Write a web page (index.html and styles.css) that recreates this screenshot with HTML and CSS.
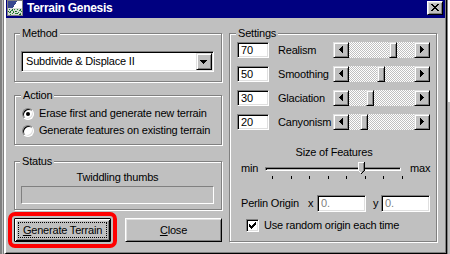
FILE: index.html
```html
<!DOCTYPE html>
<html>
<head>
<meta charset="utf-8">
<link rel="stylesheet" href="styles.css">
</head>
<body>
<div class="screen">
  <div class="desk-left"></div>
  <div class="window">
    <div class="titlebar">
      <svg class="app-icon" width="16" height="16" viewBox="0 0 16 16" shape-rendering="crispEdges">
        <rect x="0" y="0" width="16" height="16" fill="#808080"/>
        <rect x="1" y="1" width="14" height="14" fill="#c8d0d8"/>
        <rect x="1" y="1" width="9" height="7" fill="#384890"/>
        <polygon points="10,1 15,1 15,8 6,8" fill="#ffffff"/>
        <rect x="1" y="8" width="14" height="7" fill="#d8dcd8"/>
        <path d="M2 9h1v1H2zM4 10h2v1H4zM7 9h1v1H7zM9 11h1v1H9zM12 10h2v1h-2zM2 12h2v1H2zM5 13h1v1H5zM8 13h2v1H8zM11 12h1v1h-1zM13 13h1v1h-1zM3 14h1v1H3zM6 11h1v1H6zM10 9h1v1h-1zM14 11h1v1h-1z" fill="#2a8a3a"/>
        <path d="M1 11h1v1H1zM3 11h1v1H3zM6 12h1v1H6zM10 13h1v1h-1zM12 14h2v1h-2zM5 9h1v1H5zM8 11h1v1H8zM13 9h1v1h-1z" fill="#106020"/>
      </svg>
      <span class="title">Terrain Genesis</span>
      <span class="title-close">
        <svg width="14" height="12" viewBox="0 0 14 12" shape-rendering="crispEdges">
          <path d="M3 2h2v1H3zM9 2h2v1H9zM4 3h2v1H4zM8 3h2v1H8zM5 4h4v1H5zM6 5h2v1H6zM5 6h4v1H5zM4 7h2v1H4zM8 7h2v1H8zM3 8h2v1H3zM9 8h2v1H9z" fill="#000"/>
        </svg>
      </span>
    </div>
    <div class="client">
      <div class="col-left">
        <fieldset class="group method">
          <legend>Method</legend>
          <div class="combo">
            <span class="combo-text">Subdivide &amp; Displace II</span>
            <span class="combo-btn">
              <svg width="14" height="15" viewBox="0 0 14 15" shape-rendering="crispEdges"><path d="M3 6h7v1H3zM4 7h5v1H4zM5 8h3v1H5zM6 9h1v1H6z" fill="#000"/></svg>
            </span>
          </div>
        </fieldset>
        <fieldset class="group action">
          <legend>Action</legend>
          <div class="radio-row"><span class="radio checked"><span class="dot"></span></span><span>Erase first and generate new terrain</span></div>
          <div class="radio-row"><span class="radio"></span><span>Generate features on existing terrain</span></div>
        </fieldset>
        <fieldset class="group status">
          <legend>Status</legend>
          <div class="status-text">Twiddling thumbs</div>
          <div class="progress"></div>
        </fieldset>
        <div class="buttons">
          <div class="btn default highlighted"><span class="focus"><u>G</u>enerate Terrain</span></div>
          <div class="btn"><span class="plain"><u>C</u>lose</span></div>
        </div>
      </div>
      <fieldset class="group settings">
        <legend>Settings</legend>
        <div class="set-row">
          <div class="edit">70</div>
          <span class="set-label">Realism</span>
          <div class="hscroll">
            <span class="arrow"><svg width="14" height="14" viewBox="0 0 14 14" shape-rendering="crispEdges"><path d="M5 6h1v1H5zM6 5h1v3H6zM7 4h1v5H7zM8 3h1v7H8z" fill="#000"/></svg></span>
            <div class="track"><span class="thumb" style="margin-left:40px"></span></div>
            <span class="arrow"><svg width="14" height="14" viewBox="0 0 14 14" shape-rendering="crispEdges"><path d="M5 3h1v7H5zM6 4h1v5H6zM7 5h1v3H7zM8 6h1v1H8z" fill="#000"/></svg></span>
          </div>
        </div>
        <div class="set-row">
          <div class="edit">50</div>
          <span class="set-label">Smoothing</span>
          <div class="hscroll">
            <span class="arrow"><svg width="14" height="14" viewBox="0 0 14 14" shape-rendering="crispEdges"><path d="M5 6h1v1H5zM6 5h1v3H6zM7 4h1v5H7zM8 3h1v7H8z" fill="#000"/></svg></span>
            <div class="track"><span class="thumb" style="margin-left:28px"></span></div>
            <span class="arrow"><svg width="14" height="14" viewBox="0 0 14 14" shape-rendering="crispEdges"><path d="M5 3h1v7H5zM6 4h1v5H6zM7 5h1v3H7zM8 6h1v1H8z" fill="#000"/></svg></span>
          </div>
        </div>
        <div class="set-row">
          <div class="edit">30</div>
          <span class="set-label">Glaciation</span>
          <div class="hscroll">
            <span class="arrow"><svg width="14" height="14" viewBox="0 0 14 14" shape-rendering="crispEdges"><path d="M5 6h1v1H5zM6 5h1v3H6zM7 4h1v5H7zM8 3h1v7H8z" fill="#000"/></svg></span>
            <div class="track"><span class="thumb" style="margin-left:17px"></span></div>
            <span class="arrow"><svg width="14" height="14" viewBox="0 0 14 14" shape-rendering="crispEdges"><path d="M5 3h1v7H5zM6 4h1v5H6zM7 5h1v3H7zM8 6h1v1H8z" fill="#000"/></svg></span>
          </div>
        </div>
        <div class="set-row">
          <div class="edit">20</div>
          <span class="set-label">Canyonism</span>
          <div class="hscroll">
            <span class="arrow"><svg width="14" height="14" viewBox="0 0 14 14" shape-rendering="crispEdges"><path d="M5 6h1v1H5zM6 5h1v3H6zM7 4h1v5H7zM8 3h1v7H8z" fill="#000"/></svg></span>
            <div class="track"><span class="thumb" style="margin-left:11px"></span></div>
            <span class="arrow"><svg width="14" height="14" viewBox="0 0 14 14" shape-rendering="crispEdges"><path d="M5 3h1v7H5zM6 4h1v5H6zM7 5h1v3H7zM8 6h1v1H8z" fill="#000"/></svg></span>
          </div>
        </div>

        <div class="size-label">Size of Features</div>
        <div class="slider-row">
          <span class="min">min</span>
          <div class="channel-wrap">
            <div class="channel"></div>
            <svg class="slider-thumb" style="left:93px" width="7" height="12" viewBox="0 0 7 12" shape-rendering="crispEdges">
              <path d="M0 0h7v9l-3 3l-3 -3z" fill="#c0c0c0"/>
              <path d="M0 0h6v1H1v8H0z" fill="#ffffff"/>
              <path d="M6 0h1v9H6zM5 9h1v1H5zM4 10h1v1H4zM3 11h1v1H3z" fill="#000"/>
              <path d="M5 1h1v8H5zM4 9h1v1H4z" fill="#808080"/>
              <path d="M1 9h1v1H1zM2 10h1v1H2z" fill="#ffffff"/>
            </svg>
          </div>
          <span class="max">max</span>
        </div>
        <div class="ticks">
          <span></span><span></span><span></span><span></span><span></span><span></span><span></span><span></span>
        </div>

        <div class="perlin-row">
          <span class="perlin-label">Perlin Origin</span>
          <span class="axis">x</span>
          <div class="edit wide disabled">0.</div>
          <span class="axis y">y</span>
          <div class="edit wide disabled">0.</div>
        </div>
        <div class="check-row">
          <span class="checkbox">
            <svg width="9" height="9" viewBox="0 0 9 9" shape-rendering="crispEdges">
              <path d="M7 1h1v1H7zM6 2h2v1H6zM1 3h1v1H1zM5 3h3v1H5zM1 4h2v1H1zM4 4h3v1H4zM1 5h5v1H1zM2 6h3v1H2zM3 7h1v1H3z" fill="#000"/>
            </svg>
          </span>
          <span>Use random origin each time</span>
        </div>
      </fieldset>
    </div>
  </div>
  <div class="desk-right"></div>
</div>
</body>
</html>
```
FILE: styles.css
```css
html, body {
  margin: 0;
  padding: 0;
}
body {
  width: 450px;
  height: 254px;
  overflow: hidden;
  background: #c0c0c0;
  font-family: "Liberation Sans", Arial, sans-serif;
  font-size: 11px;
  line-height: 13px;
  letter-spacing: -0.2px;
  color: #000;
}
.screen {
  display: flex;
  width: 450px;
  height: 254px;
}
.desk-left {
  width: 4px;
  flex: none;
  background: linear-gradient(to right, #808080 0 2px, #c0c0c0 2px 3px, #808080 3px 4px);
}
.window {
  width: 443px;
  height: 254px;
  flex: none;
  box-sizing: border-box;
  background: #c0c0c0;
  border-left: 2px solid #fff;
  border-right: 1px solid #000;
  border-bottom: 1px solid #000;
  box-shadow: inset -1px -1px 0 #808080;
  display: flex;
  flex-direction: column;
}
.desk-right {
  flex: 1;
  background: linear-gradient(#ffffff 0 40%, #c0c0c0 40% 100%);
  border-left: 1px solid #808080;
}

/* title bar */
.titlebar {
  height: 18px;
  flex: none;
  margin-right: 1px;
  background: #000080;
  display: flex;
  align-items: center;
  color: #fff;
}
.app-icon {
  margin-left: 1px;
  margin-top: -2px;
  flex: none;
}
.title {
  margin-left: 4px;
  font-weight: bold;
  font-size: 12px;
  letter-spacing: -0.3px;
  margin-top: -1px;
}
.title-close {
  margin-left: auto;
  margin-right: 2px;
  margin-top: -3px;
  width: 16px;
  height: 14px;
  box-sizing: border-box;
  background: #c0c0c0;
  border: 1px solid;
  border-color: #fff #000 #000 #fff;
  box-shadow: inset 1px 1px 0 #dfdfdf, inset -1px -1px 0 #808080;
  display: flex;
}

/* client */
.client {
  flex: 1;
  padding: 9px 0 0 8px;
  display: grid;
  grid-template-columns: 208px 208px;
  column-gap: 7px;
  align-items: stretch;
  align-content: start;
}
.col-left {
  display: flex;
  flex-direction: column;
}

.group {
  margin: 0;
  min-inline-size: 0;
  border: 1px solid #808080;
  box-shadow: 1px 1px 0 #fff, inset 1px 1px 0 #fff;
}
.group legend {
  padding: 0 2px;
  margin-left: -1px;
  line-height: 13px;
  background: #c0c0c0;
}

/* method */
.method {
  padding: 11px 7px 9px 6px;
}
.combo {
  width: 193px;
  height: 21px;
  box-sizing: border-box;
  background: #fff;
  border: 1px solid;
  border-color: #808080 #fff #fff #808080;
  box-shadow: inset 1px 1px 0 #000, inset -1px -1px 0 #dfdfdf;
  display: flex;
  align-items: center;
  padding: 1px;
}
.combo-text {
  flex: 1;
  padding-left: 3px;
}
.combo-btn {
  width: 16px;
  height: 17px;
  box-sizing: border-box;
  background: #c0c0c0;
  border: 1px solid;
  border-color: #dfdfdf #000 #000 #dfdfdf;
  box-shadow: inset 1px 1px 0 #fff, inset -1px -1px 0 #808080;
  display: flex;
}

/* action */
.action {
  margin-top: 7px;
  padding: 3px 6px 5px 7px;
}
.radio-row {
  height: 17px;
  display: flex;
  align-items: center;
}
.radio {
  width: 12px;
  height: 12px;
  box-sizing: border-box;
  border-radius: 50%;
  background: #fff;
  border: 1px solid;
  border-color: #808080 #fff #fff #808080;
  box-shadow: inset 1px 1px 0 #000, inset -1px -1px 0 #dfdfdf;
  margin-right: 5px;
  display: flex;
  align-items: center;
  justify-content: center;
  flex: none;
}
.radio .dot {
  width: 4px;
  height: 4px;
  border-radius: 50%;
  background: #000;
}

/* status */
.status {
  margin-top: 10px;
  padding: 3px 7px 5px 6px;
}
.status-text {
  text-align: center;
}
.progress {
  margin-top: 2px;
  height: 18px;
  box-sizing: border-box;
  border: 1px solid;
  border-color: #808080 #fff #fff #808080;
}

/* buttons */
.buttons {
  margin-top: 8px;
  display: flex;
  gap: 14px;
}
.btn {
  width: 97px;
  height: 24px;
  box-sizing: border-box;
  border: 1px solid;
  border-color: #fff #000 #000 #fff;
  box-shadow: inset 1px 1px 0 #dfdfdf, inset -1px -1px 0 #808080;
  display: flex;
  padding: 3px;
}
.btn.default {
  border: 1px solid #000;
  box-shadow: inset 1px 1px 0 #fff, inset -1px -1px 0 #000, inset 2px 2px 0 #dfdfdf, inset -2px -2px 0 #808080;
}
.btn.highlighted {
  outline: 4px solid #ff0000;
  outline-offset: 2px;
  border-radius: 1px;
}
.focus, .plain {
  flex: 1;
  display: flex;
  align-items: center;
  justify-content: center;
}
.focus {
  border: 1px dotted #000;
}

/* settings */
.settings {
  padding: 2px 7px 1px 7px;
}
.set-row {
  display: flex;
  align-items: center;
  height: 16px;
  margin-bottom: 8px;
}
.edit {
  width: 32px;
  height: 16px;
  box-sizing: border-box;
  background: #fff;
  border: 1px solid;
  border-color: #808080 #fff #fff #808080;
  box-shadow: inset 1px 1px 0 #000, inset -1px -1px 0 #dfdfdf;
  padding-left: 3px;
  display: flex;
  align-items: center;
  flex: none;
}
.set-label {
  width: 55px;
  margin-left: 9px;
  flex: none;
  white-space: nowrap;
}
.hscroll {
  width: 97px;
  height: 16px;
  display: flex;
  flex: none;
}
.arrow {
  width: 16px;
  height: 16px;
  box-sizing: border-box;
  background: #c0c0c0;
  border: 1px solid;
  border-color: #dfdfdf #000 #000 #dfdfdf;
  box-shadow: inset 1px 1px 0 #fff, inset -1px -1px 0 #808080;
  display: flex;
  flex: none;
}
.track {
  flex: 1;
  height: 16px;
  background: repeating-conic-gradient(#c0c0c0 0 25%, #fff 0 50%) 0 0 / 2px 2px;
  display: flex;
}
.thumb {
  width: 8px;
  height: 16px;
  box-sizing: border-box;
  background: #c0c0c0;
  border: 1px solid;
  border-color: #dfdfdf #000 #000 #dfdfdf;
  box-shadow: inset 1px 1px 0 #fff, inset -1px -1px 0 #808080;
  flex: none;
}

.size-label {
  margin-top: 16px;
  text-align: center;
  padding-left: 2px;
}
.slider-row {
  margin-top: 3px;
  height: 13px;
  display: flex;
  align-items: center;
  padding-left: 4px;
}
.min {
  width: 24px;
  flex: none;
}
.channel-wrap {
  position: relative;
  width: 136px;
  height: 13px;
  flex: none;
  display: flex;
  align-items: center;
}
.channel {
  width: 100%;
  height: 4px;
  box-sizing: border-box;
  border: 1px solid;
  border-color: #808080 #fff #fff #808080;
  box-shadow: inset 1px 1px 0 #000;
  background: #c0c0c0;
}
.slider-thumb {
  position: absolute;
  top: 0;
}
.max {
  margin-left: 9px;
}
.ticks {
  margin-top: 1px;
  margin-left: 32px;
  width: 131px;
  padding-left: 3px;
  height: 3px;
  display: flex;
  justify-content: space-between;
}
.ticks span {
  width: 1px;
  height: 3px;
  background: #000;
}

.perlin-row {
  margin-top: 16px;
  display: flex;
  align-items: center;
  height: 17px;
  padding-left: 4px;
}
.perlin-label {
  width: 67px;
  flex: none;
  white-space: nowrap;
}
.axis {
  width: 9px;
  flex: none;
}
.axis.y {
  margin-left: 7px;
  width: 8px;
}
.edit.wide {
  width: 49px;
  height: 17px;
}
.edit.disabled {
  color: #808080;
}
.check-row {
  margin-top: 7px;
  display: flex;
  align-items: center;
  height: 13px;
  padding-left: 9px;
}
.checkbox {
  width: 13px;
  height: 13px;
  box-sizing: border-box;
  background: #fff;
  border: 1px solid;
  border-color: #808080 #fff #fff #808080;
  box-shadow: inset 1px 1px 0 #000, inset -1px -1px 0 #dfdfdf;
  display: flex;
  align-items: center;
  justify-content: center;
  margin-right: 5px;
  flex: none;
}
```
